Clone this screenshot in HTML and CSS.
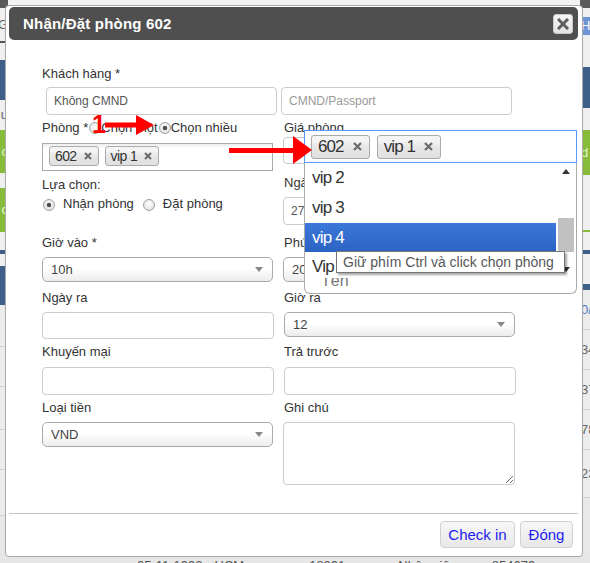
FILE: index.html
```html
<!DOCTYPE html>
<html lang="vi">
<head>
<meta charset="utf-8">
<title>Nhận/Đặt phòng 602</title>
<link rel="stylesheet" href="styles.css">
</head>
<body>
<div class="bg">
  <div class="bg-main">
    <div class="strip strip-left">
      <div class="b dark h8"></div>
      <div class="b light h33 txt"><span>G</span></div>
      <div class="b line h2"></div>
      <div class="b light h17"></div>
      <div class="b blue h40"></div>
      <div class="b light h30 txt"><span>u</span></div>
      <div class="b green h43 txt wt"><span>c</span></div>
      <div class="b light h15"></div>
      <div class="b green h44 txt wt"><span>c</span></div>
      <div class="b light h18"></div>
      <div class="b blue h4"></div>
      <div class="b light h12"></div>
      <div class="b blue h39"></div>
      <div class="b cell h42"></div>
      <div class="b cell h40"></div>
      <div class="b cell h43 txt"><span>,</span></div>
      <div class="b cell h40"></div>
      <div class="b cell h46"></div>
    </div>
    <div class="bg-mid"></div>
    <div class="strip strip-right">
      <div class="b dark h8"></div>
      <div class="b light h9"></div>
      <div class="b sky h18 txt-l"><span>H</span></div>
      <div class="b light h32"></div>
      <div class="b blue h41"></div>
      <div class="b light h22"></div>
      <div class="b green h45 txt-l wt"><span>d</span></div>
      <div class="b light h55"></div>
      <div class="b gline h2"></div>
      <div class="b light h18"></div>
      <div class="b blue h4"></div>
      <div class="b light h30"></div>
      <div class="b blue h6"></div>
      <div class="b cell h40 txt-l bl"><span>0/I</span></div>
      <div class="b cell h40 txt-l"><span>34</span></div>
      <div class="b cell h40 txt-l"><span>37</span></div>
      <div class="b cell h40 txt-l"><span>78</span></div>
      <div class="b cell h48 txt-l"><span>23</span></div>
    </div>
  </div>
  <div class="bg-foot">
    <span class="f1">05-11-1992</span>
    <span class="f2">HCM</span>
    <span class="f3">18291</span>
    <span class="f4">Nhân viên</span>
    <span class="f5">854679</span>
  </div>
</div>

<div class="dialog">
  <div class="titlebar">
    <span class="title">Nhận/Đặt phòng 602</span>
    <button class="close" type="button">
      <svg width="12" height="12" viewBox="0 0 12 12"><path d="M2 2 L10 10 M10 2 L2 10" stroke="#5e5e5e" stroke-width="3" stroke-linecap="square"/></svg>
    </button>
  </div>
  <div class="content">
    <div class="label">Khách hàng *</div>
    <div class="cust">
      <div class="input val">Không CMND</div>
      <div class="input ph">CMND/Passport</div>
    </div>
    <div class="cols">
      <div class="col col-l">
        <div class="label phong">Phòng *<span class="radio"></span>Chọn một<span class="radio on"></span>Chọn nhiều</div>
        <div class="multi">
          <span class="tag">602<svg class="x" viewBox="0 0 8 8"><path d="M1 1 L7 7 M7 1 L1 7" stroke="#6b6b6b" stroke-width="2"/></svg></span>
          <span class="tag">vip 1<svg class="x" viewBox="0 0 8 8"><path d="M1 1 L7 7 M7 1 L1 7" stroke="#6b6b6b" stroke-width="2"/></svg></span>
        </div>
        <div class="label sm">Lựa chọn:</div>
        <div class="radios">
          <span class="radio on"></span><span class="rtext">Nhận phòng</span>
          <span class="radio"></span><span class="rtext">Đặt phòng</span>
        </div>
        <div class="label">Giờ vào *</div>
        <div class="select"><span>10h</span><i class="caret"></i></div>
        <div class="label">Ngày ra</div>
        <div class="input i27"></div>
        <div class="label lb7">Khuyến mại</div>
        <div class="input"></div>
        <div class="label">Loại tiền</div>
        <div class="select"><span>VND</span><i class="caret"></i></div>
      </div>
      <div class="col col-r">
        <div class="label gia">Giá phòng</div>
        <div class="input i27 shift gap11"></div>
        <div class="label">Ngày vào</div>
        <div class="input shift gap10 val">27-10-2015</div>
        <div class="label">Phút</div>
        <div class="select shift"><span>20</span><i class="caret"></i></div>
        <div class="label">Giờ ra</div>
        <div class="select"><span>12</span><i class="caret"></i></div>
        <div class="label lb7">Trả trước</div>
        <div class="input"></div>
        <div class="label">Ghi chú</div>
        <textarea class="note"></textarea>
      </div>
    </div>
  </div>
  <div class="footer">
    <button class="btn btn-check" type="button">Check in</button>
    <button class="btn btn-close" type="button">Đóng</button>
  </div>
</div>

<div class="dropdown">
  <div class="dd-top">
    <span class="dtag">602<svg class="dx" viewBox="0 0 9 9"><path d="M1 1 L8 8 M8 1 L1 8" stroke="#6b6b6b" stroke-width="2.2"/></svg></span>
    <span class="dtag">vip 1<svg class="dx" viewBox="0 0 9 9"><path d="M1 1 L8 8 M8 1 L1 8" stroke="#6b6b6b" stroke-width="2.2"/></svg></span>
  </div>
  <div class="dd-list">
    <div class="opts">
      <div class="opt">vip 2</div>
      <div class="opt">vip 3</div>
      <div class="opt sel">vip 4</div>
      <div class="opt">Vip 5</div>
    </div>
    <div class="sbar">
      <div class="sb-btn"><i class="up"></i></div>
      <div class="sb-track"><div class="thumb"></div></div>
      <div class="sb-btn"><i class="down"></i></div>
    </div>
  </div>
  <div class="dd-bottom"><span>Tên</span></div>
</div>

<div class="tooltip">Giữ phím Ctrl và click chọn phòng</div>

<div class="annot annot1">
  <span class="num">1</span>
  <svg class="arrow a1" width="50" height="24" viewBox="0 0 50 24"><path d="M0 7.5 H31 V0 L49 10 L31 20 V12.5 H0 Z" fill="#f00"/></svg>
</div>
<svg class="arrow a2" width="84" height="30" viewBox="0 0 84 30"><path d="M0 12 H64 V0 L83 14 L64 28 V17 H0 Z" fill="#f00"/></svg>
</body>
</html>
```
FILE: styles.css
```css
* { box-sizing: border-box; }
html, body { margin: 0; padding: 0; }
body {
  width: 590px;
  height: 563px;
  overflow: hidden;
  position: relative;
  background: #e8e8e8;
  font-family: "Liberation Sans", Arial, sans-serif;
  font-size: 13px;
  color: #333;
}

/* ---------- background page ---------- */
.bg { display: flex; flex-direction: column; height: 563px; }
.bg-main { display: flex; height: 553px; }
.bg-mid { flex: 1; background: #f2f2f2; }
.strip { display: flex; flex-direction: column; overflow: hidden; }
.strip-left { width: 8px; }
.strip-right { width: 10px; }
.b { flex: none; overflow: hidden; font-size: 13px; line-height: 16px; color: #666; }
.dark { background: #5b5b5b; }
.light { background: #efefef; }
.line { background: #555; }
.blue { background: #3e5f88; }
.sky { background: #6f94d5; color: #fff; }
.green { background: #86bc3a; }
.gline { background: #86bc3a; }
.cell { background: #ececec; border-bottom: 1px solid #d2d2d2; }
.txt { display: flex; justify-content: flex-end; align-items: center; }
.txt-l { display: flex; justify-content: flex-start; align-items: center; padding-left: 1px; }
.wt { color: #e8f5d0; }
.bl { color: #4a78c0; }
.h2 { height: 2px; } .h4 { height: 4px; } .h6 { height: 6px; } .h8 { height: 8px; }
.h9 { height: 9px; } .h12 { height: 12px; } .h15 { height: 15px; } .h17 { height: 17px; }
.h18 { height: 18px; } .h22 { height: 22px; } .h30 { height: 30px; } .h32 { height: 32px; }
.h33 { height: 33px; } .h39 { height: 39px; } .h40 { height: 40px; } .h41 { height: 41px; }
.h42 { height: 42px; } .h43 { height: 43px; } .h44 { height: 44px; } .h45 { height: 45px; }
.h46 { height: 46px; } .h48 { height: 48px; } .h55 { height: 55px; }
.bg-foot {
  height: 10px;
  background: #e6e6e6;
  display: flex;
  font-size: 13px;
  line-height: 16px;
  color: #555;
  overflow: hidden;
  padding-top: 5px;
}
.bg-foot span { display: block; white-space: nowrap; }
.f1 { margin-left: 137px; }
.f2 { margin-left: 12px; }
.f3 { margin-left: 65px; }
.f4 { margin-left: 53px; }
.f5 { margin-left: 35px; }

/* ---------- dialog ---------- */
.dialog {
  position: absolute;
  left: 5px;
  top: 5px;
  width: 578px;
  height: 552px;
  background: #fff;
  border: 1px solid #a9a9a9;
  border-radius: 4px;
  padding: 1px 4px 0 3px;
  display: flex;
  flex-direction: column;
}
.titlebar {
  flex: none;
  height: 33px;
  background: #4f4f4f;
  border-radius: 5px;
  display: flex;
  align-items: center;
  justify-content: space-between;
  padding: 0 5px 0 14px;
}
.title {
  color: #fff;
  font-weight: bold;
  font-size: 15px;
  letter-spacing: 0.2px;
}
.close {
  width: 20px;
  height: 20px;
  padding: 0;
  border: 1px solid #c8c8c8;
  border-radius: 3px;
  background: linear-gradient(#f6f6f6, #e2e2e2);
  display: flex;
  align-items: center;
  justify-content: center;
}
.close svg { display: block; }

.content { flex: 1; padding: 26px 0 0 33px; }
.label { height: 16px; line-height: 16px; margin-bottom: 6px; white-space: nowrap; }
.label.phong { margin-bottom: 7px; display: flex; align-items: center; }
.label.sm { margin-bottom: 3px; }
.label.gia { margin-bottom: 1px; }
.label.lb7 { margin-bottom: 7px; }
.label.phong .radio { margin: 0 0 0 1px; }

.cust { display: flex; gap: 4px; margin: -1px 0 5px 4px; }
.input {
  width: 232px;
  height: 28px;
  border: 1px solid #cbcbcb;
  border-radius: 4px;
  padding-left: 7px;
  display: flex;
  align-items: center;
  font-size: 12px;
  color: #555;
  margin-bottom: 5px;
  background: #fff;
}
.cust .input { width: 231px; margin-bottom: 0; }
.input.ph { color: #999; }
.input.i27 { height: 27px; }
.input.shift { margin-left: -1px; }
.input.gap11 { margin-bottom: 11px; }
.input.gap10 { margin-bottom: 10px; }

.cols { display: flex; gap: 10px; }
.col { display: flex; flex-direction: column; }
.col-l { width: 232px; }
.col-r { width: 232px; }

.radio {
  flex: none;
  display: inline-block;
  width: 12px;
  height: 12px;
  border-radius: 50%;
  border: 1px solid #a0a0a0;
  background: radial-gradient(circle at 50% 40%, #fdfdfd, #dcdcdc);
  position: relative;
}
.radio.on::after {
  content: "";
  position: absolute;
  left: 3px;
  top: 3px;
  width: 4px;
  height: 4px;
  border-radius: 50%;
  background: #4a4a4a;
  box-shadow: 0 0 1px #4a4a4a;
}

.multi {
  width: 231px;
  height: 28px;
  border: 1px solid #aaa;
  background: linear-gradient(#eee 1%, #fff 15%);
  padding: 2px 0 0 6px;
  display: flex;
  gap: 6px;
  margin-bottom: 6px;
}
.tag {
  height: 20px;
  border: 1px solid #aaa;
  border-radius: 3px;
  background: linear-gradient(#f4f4f4 20%, #e6e6e6 52%, #e0e0e0);
  display: flex;
  align-items: center;
  padding: 0 6px 0 5px;
  font-size: 14px;
  color: #333;
  letter-spacing: -0.6px;
}
.tag .x { width: 8px; height: 8px; margin-left: 7px; display: block; }

.radios { height: 16px; display: flex; align-items: center; margin-bottom: 23px; line-height: 16px; }
.radios .radio { margin-top: 1px; }
.rtext { margin-left: 8px; margin-right: 9px; }
.radios .radio:first-child { margin-left: 1px; }

.select {
  width: 231px;
  height: 25px;
  border: 1px solid #aaa;
  border-radius: 5px;
  background: linear-gradient(#fff 0%, #fff 45%, #ececec 100%);
  display: flex;
  align-items: center;
  justify-content: space-between;
  padding: 0 9px 0 8px;
  font-size: 13px;
  color: #444;
  margin-bottom: 8px;
}
.select.shift { margin-left: -1px; }
.caret {
  width: 0;
  height: 0;
  border-left: 4px solid transparent;
  border-right: 4px solid transparent;
  border-top: 5px solid #888;
}
.col-r .select { margin-bottom: 7px; }
.col-r .select.shift { margin-bottom: 8px; }

.note {
  display: block;
  width: 232px;
  height: 63px;
  margin: 0 0 0 -1px;
  border: 1px solid #cbcbcb;
  border-radius: 4px;
  padding: 0;
  resize: both;
  font-family: inherit;
  outline: none;
}

.footer {
  flex: none;
  height: 43px;
  border-top: 1px solid #c4c4c4;
  display: flex;
  justify-content: flex-end;
  align-items: flex-start;
  gap: 5px;
  padding: 7px 5px 0 0;
}
.btn {
  height: 27px;
  padding: 0;
  border: 1px solid #d1d1d1;
  border-radius: 4px;
  background: linear-gradient(#f7f7f7, #e8e8e8);
  font-family: "Liberation Sans", Arial, sans-serif;
  font-size: 15px;
  color: #1c1cf0;
  line-height: 25px;
  white-space: nowrap;
  text-align: center;
}
.btn-check { width: 75px; }
.btn-close { width: 53px; }

/* ---------- open dropdown overlay ---------- */
.dropdown {
  position: absolute;
  left: 304px;
  top: 130px;
  width: 273px;
  height: 164px;
  display: flex;
  flex-direction: column;
}
.dd-top {
  flex: none;
  height: 33px;
  border: 1px solid #5897fb;
  background: #fff;
  display: flex;
  align-items: center;
  gap: 7px;
  padding-left: 6px;
}
.dtag {
  height: 24px;
  border: 1px solid #aaa;
  border-radius: 3px;
  background: linear-gradient(#f4f4f4 20%, #e6e6e6 52%, #e0e0e0);
  display: flex;
  align-items: center;
  padding: 0 7px 0 6px;
  font-size: 17px;
  color: #333;
  letter-spacing: -0.9px;
}
.dtag .dx { width: 9px; height: 9px; margin-left: 9px; display: block; }
.dd-list {
  flex: none;
  height: 115px;
  display: flex;
  border-left: 1px solid #aaa;
  border-right: 1px solid #aaa;
  background: #fff;
}
.opts { flex: 1; overflow: hidden; }
.opt {
  height: 30px;
  line-height: 30px;
  padding-left: 7px;
  font-size: 17px;
  color: #333;
  letter-spacing: -0.8px;
}
.opt.sel {
  height: 29px;
  line-height: 29px;
  color: #fff;
  background: linear-gradient(#3a78da, #2c63c2);
}
.sbar { width: 20px; display: flex; flex-direction: column; background: #fff; }
.sb-btn { height: 17px; display: flex; align-items: center; justify-content: center; }
.sb-track { flex: 1; padding: 38px 2px 0 2px; }
.thumb { height: 34px; background: #c1c1c1; }
.up { width: 0; height: 0; border-left: 4px solid transparent; border-right: 4px solid transparent; border-bottom: 5px solid #333; }
.down { width: 0; height: 0; border-left: 4px solid transparent; border-right: 4px solid transparent; border-top: 5px solid #333; }
.dd-bottom {
  flex: 1;
  border: 1px solid #aaa;
  border-top: none;
  border-radius: 0 0 6px 6px;
  background: #fff;
  overflow: hidden;
  padding-left: 16px;
  font-size: 16px;
  line-height: 16px;
  color: #777;
}
.dd-bottom span { display: block; margin-top: -5px; }

.tooltip {
  position: absolute;
  left: 336px;
  top: 251px;
  width: 229px;
  height: 22px;
  border: 1px solid #767676;
  background: #fff;
  box-shadow: 2px 2px 2px rgba(0, 0, 0, 0.35);
  font-size: 14px;
  line-height: 20px;
  padding-left: 6px;
  color: #575757;
  white-space: nowrap;
}

/* ---------- red annotation arrows ---------- */
.annot1 {
  position: absolute;
  left: 92px;
  top: 110px;
  display: flex;
  align-items: flex-start;
}
.num {
  color: #f00;
  font-weight: bold;
  font-size: 25px;
  line-height: 28px;
  font-family: "Liberation Sans", Arial, sans-serif;
}
.arrow { display: block; }
.a1 { margin-top: 5px; margin-left: -1px; }
.a2 { position: absolute; left: 229px; top: 136px; }
```
